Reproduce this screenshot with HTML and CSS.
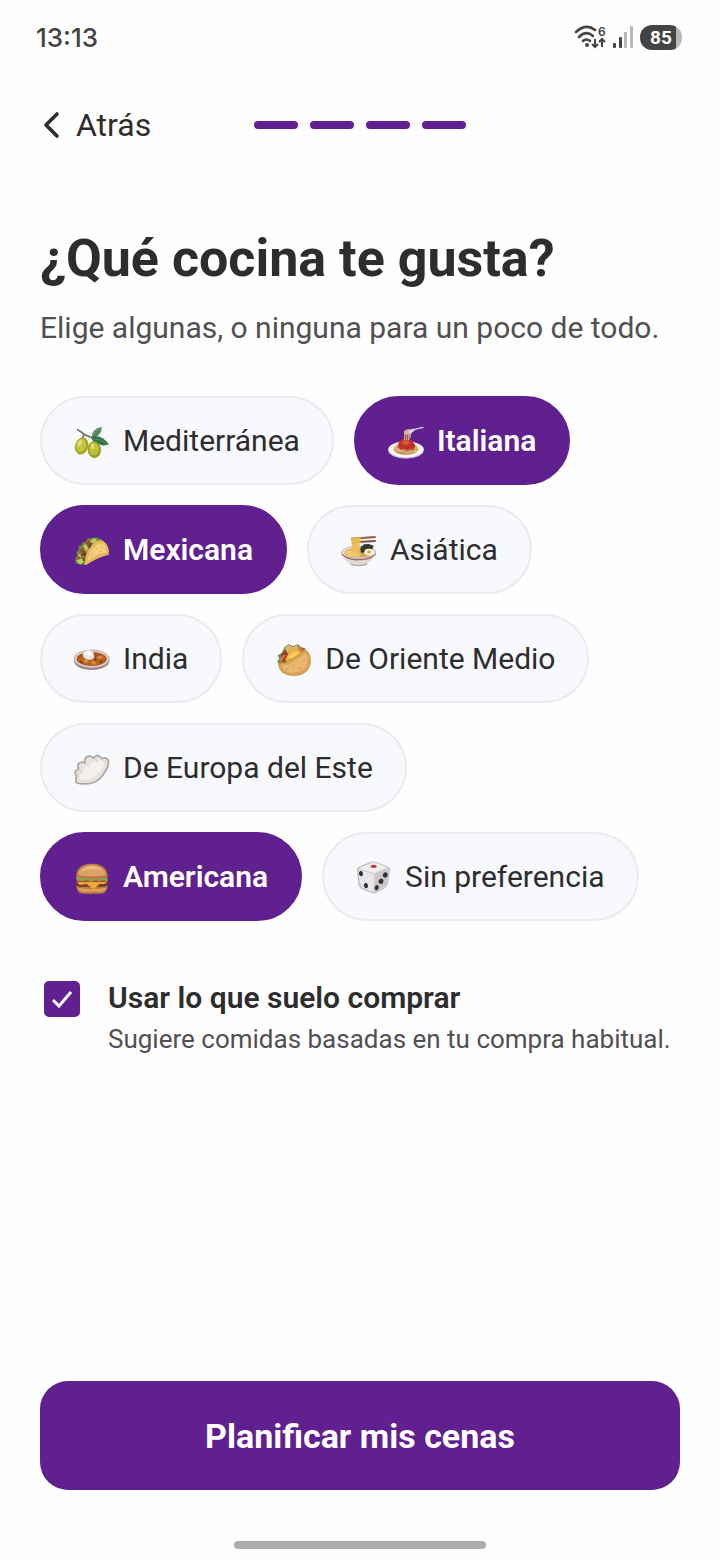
FILE: index.html
```html
<!DOCTYPE html>
<html lang="es">
<head>
    <meta charset="UTF-8">
    <meta name="viewport" content="width=device-width, initial-scale=1.0">
    <title>¿Qué cocina te gusta?</title>
    <link rel="stylesheet" href="styles.css">
</head>
<body>
    <div class="status-bar">
        <span class="clock">13:13</span>
        <div class="status-icons">
            <svg class="wifi" viewBox="0 0 32 26" aria-hidden="true">
                <g fill="none" stroke="#444" stroke-width="2.6" stroke-linecap="round">
                    <path d="M2 8Q12 -1 21 6"/>
                    <path d="M5 13Q12 6 19 12"/>
                    <path d="M9 17Q12 14 16 17"/>
                </g>
                <circle cx="13" cy="21" r="2" fill="#444"/>
                <text x="24" y="12" class="wifi-gen">6</text>
                <path d="M21 15v8m-3-3l3 3 3-3M28 23v-8m-3 3l3-3 3 3" fill="none" stroke="#444" stroke-width="2"/>
            </svg>
            <svg class="signal" viewBox="0 0 20 24" aria-hidden="true">
                <rect x="0" y="18" width="3" height="5" rx="1" fill="#444"/>
                <rect x="6" y="12" width="3" height="11" rx="1" fill="#444"/>
                <rect x="11" y="7" width="3" height="16" rx="1" fill="#b9b9b9"/>
                <rect x="17" y="1" width="3" height="22" rx="1" fill="#b9b9b9"/>
            </svg>
            <span class="battery">85</span>
        </div>
    </div>

    <header class="top-nav">
        <button class="back-btn" type="button">
            <svg class="back-icon" viewBox="0 0 18 28" aria-hidden="true">
                <path d="M14 3L3 14L14 25" fill="none" stroke="currentColor" stroke-width="3.6" stroke-linecap="round" stroke-linejoin="round"/>
            </svg>
            Atrás
        </button>
        <div class="steps">
            <span class="step"></span>
            <span class="step"></span>
            <span class="step"></span>
            <span class="step"></span>
        </div>
    </header>

    <main class="content">
        <h1 class="title">¿Qué cocina te gusta?</h1>
        <p class="subtitle">Elige algunas, o ninguna para un poco de todo.</p>

        <div class="chips">
            <button class="chip" type="button" aria-pressed="false">
                <svg class="chip-icon" viewBox="0 0 108 108" aria-hidden="true">
                    <path d="M53 43Q54 18 83 11Q85 32 62 44Z" fill="#4f8a5c"/>
                    <path d="M57 40Q62 24 80 15" fill="none" stroke="#8bb58c" stroke-width="2"/>
                    <path d="M11 20L33 35L58 46M30 34L25 46M55 44L60 58" fill="none" stroke="#6d705c" stroke-width="5" stroke-linecap="round"/>
                    <path d="M50 43Q80 30 105 64Q75 76 50 43Z" fill="#2f7348"/>
                    <path d="M58 47Q80 48 98 62" fill="none" stroke="#70a276" stroke-width="2"/>
                    <ellipse cx="23" cy="69" rx="20" ry="26" transform="rotate(18 23 69)" fill="#a5a627"/>
                    <ellipse cx="21" cy="67" rx="15" ry="20" transform="rotate(18 21 67)" fill="#c4c443"/>
                    <ellipse cx="18" cy="60" rx="5" ry="9" transform="rotate(25 18 60)" fill="#e3e17c"/>
                    <ellipse cx="61" cy="80" rx="20" ry="25" transform="rotate(-5 61 80)" fill="#999d20"/>
                    <ellipse cx="60" cy="78" rx="15" ry="19" fill="#bec13c"/>
                    <ellipse cx="56" cy="70" rx="5" ry="9" fill="#e0df76"/>
                </svg>
                Mediterránea
            </button>
            <button class="chip selected" type="button" aria-pressed="true">
                <svg class="chip-icon" viewBox="0 0 108 108" aria-hidden="true">
                    <ellipse cx="54" cy="82" rx="53" ry="25" fill="#c9c2d2"/>
                    <ellipse cx="54" cy="79" rx="53" ry="24" fill="#faf7f7"/>
                    <ellipse cx="54" cy="78" rx="38" ry="18" fill="#ddb57d"/>
                    <path d="M20 80Q35 96 55 86T89 79M26 72Q42 87 76 82M28 88Q55 100 78 87" fill="none" stroke="#b98550" stroke-width="3"/>
                    <path d="M29 70Q32 49 52 46Q75 47 82 70Q78 84 67 78Q58 86 49 78Q37 84 29 70Z" fill="#bd3326"/>
                    <path d="M40 60Q52 47 66 57Q62 68 51 65Z" fill="#e0583a"/>
                    <path d="M50 25V52M56 24V51M62 24V52M68 24L66 45" stroke="#c8a187" stroke-width="4"/>
                    <path d="M48 25Q57 14 73 22L70 32Q59 38 48 32Z" fill="#d7b396"/>
                    <path d="M64 28L80 19L105 13" fill="none" stroke="#d9cfe4" stroke-width="4" stroke-linecap="round"/>
                    <path d="M62 23L78 18M65 32L80 21" stroke="#eee4ee" stroke-width="3"/>
                </svg>
                Italiana
            </button>
            <button class="chip selected" type="button" aria-pressed="true">
                <svg class="chip-icon" viewBox="0 0 108 108" aria-hidden="true">
                    <path d="M5 95Q2 79 10 69Q4 61 14 53Q11 40 23 40Q22 28 36 29Q40 14 53 20Q65 13 77 20Q93 26 97 40L34 98Z" fill="#6e8934"/>
                    <path d="M10 77L18 69L27 80L15 90ZM17 55L27 48L36 60L26 66ZM36 31L46 25L54 35L43 44Z" fill="#9a492d"/>
                    <path d="M7 85L24 79L29 90L18 98ZM27 41L36 36L44 51L34 54ZM55 19L68 21L65 32L53 31Z" fill="#b6cf69"/>
                    <path d="M24 69L34 65L36 79L27 85M44 47L52 40" stroke="#643b2b" stroke-width="6" fill="none"/>
                    <path d="M14 67L20 76M32 49L39 57M48 26L59 32" stroke="#e9b15d" stroke-width="5"/>
                    <path d="M32 97Q32 64 50 44Q70 19 88 27Q108 42 104 68Q74 74 38 98Q34 101 32 97Z" fill="#e9b75f"/>
                    <path d="M41 88Q45 59 62 44Q77 30 89 36Q99 45 97 61Q65 67 41 88Z" fill="#f5ce7d"/>
                    <path d="M51 69l5 1M66 49l4 2M82 44l4 3M78 59l4-1" stroke="#dea454" stroke-width="3"/>
                </svg>
                Mexicana
            </button>
            <button class="chip" type="button" aria-pressed="false">
                <svg class="chip-icon" viewBox="0 0 108 108" aria-hidden="true">
                    <ellipse cx="53" cy="95" rx="26" ry="8" fill="#aaa39e"/>
                    <path d="M1 59Q9 98 52 99Q93 98 105 59Z" fill="#ddd9d4"/>
                    <path d="M2 66Q22 85 54 83Q86 84 104 65" fill="none" stroke="#a96a62" stroke-width="4"/>
                    <ellipse cx="53" cy="61" rx="51" ry="18" fill="#f2eeea" stroke="#948a84" stroke-width="2"/>
                    <ellipse cx="53" cy="62" rx="43" ry="14" fill="#d8a34c"/>
                    <path d="M10 61Q24 49 40 58Q52 64 62 70Q36 79 19 70Z" fill="#efcb76"/>
                    <path d="M35 23V64M41 23V67M47 23V67M53 24V66" stroke="#eec05a" stroke-width="6"/>
                    <path d="M58 47L69 37L83 36L98 41L92 58L75 61L60 62Z" fill="#303b32"/>
                    <ellipse cx="84" cy="60" rx="14" ry="10" fill="#fff8e8"/>
                    <ellipse cx="84" cy="60" rx="6" ry="5" fill="#e8a62f"/>
                    <path d="M31 20L104 15M33 31L104 27" stroke="#85513c" stroke-width="6"/>
                    <path d="M34 19L103 14" stroke="#bd7b56" stroke-width="2"/>
                    <path d="M31 18L60 16L58 32L32 34Z" fill="#eeb84e"/>
                </svg>
                Asiática
            </button>
            <button class="chip" type="button" aria-pressed="false">
                <svg class="chip-icon" viewBox="0 0 108 108" aria-hidden="true">
                    <ellipse cx="53" cy="59" rx="53" ry="28" fill="#968587"/>
                    <ellipse cx="53" cy="54" rx="53" ry="27" fill="#dfd2cc" stroke="#a58d88" stroke-width="2"/>
                    <ellipse cx="53" cy="54" rx="45" ry="21" fill="#a95320"/>
                    <path d="M12 54Q26 40 44 47T89 43Q100 53 85 65Q62 79 32 70Q17 66 12 54Z" fill="#b96524"/>
                    <path d="M27 58l10-5 8 9-9 5ZM49 64l12-5 7 8-10 5ZM68 47l11-4 8 8-12 3Z" fill="#d88d38"/>
                    <path d="M19 60l7 6M47 56l8-2M62 51l4 9M84 58l-7 7" stroke="#7b3420" stroke-width="4"/>
                    <path d="M26 43Q29 26 43 27Q57 26 60 41Q63 53 52 56Q32 59 26 43Z" fill="#e9e4e8"/>
                    <path d="M31 39Q36 29 46 31Q56 35 55 42Q44 47 31 39Z" fill="#fff"/>
                </svg>
                India
            </button>
            <button class="chip" type="button" aria-pressed="false">
                <svg class="chip-icon" viewBox="0 0 108 108" aria-hidden="true">
                    <path d="M8 73L4 60L10 54L5 43L17 35L26 17L38 9L52 15L66 10L75 18L87 22L91 43L28 84Z" fill="#70964d"/>
                    <path d="M16 55L16 40L31 23L48 15L81 22L87 38L29 71Z" fill="#a63a2e"/>
                    <path d="M26 21L38 10L52 18L63 12L69 26L36 38Z" fill="#d7b46a"/>
                    <path d="M27 56L44 25L72 26L80 39L36 66Z" fill="#edae37"/>
                    <path d="M34 50L50 32L65 31L71 39L46 54Z" fill="#f6cd59"/>
                    <path d="M14 58L26 42M68 17L79 30" stroke="#e2745a" stroke-width="6"/>
                    <path d="M9 65Q23 70 43 57Q68 45 87 24Q105 38 103 65Q101 89 78 99Q48 110 21 95Q7 85 9 65Z" fill="#dba257" stroke="#bb803f" stroke-width="2"/>
                    <path d="M18 74Q38 71 56 59Q76 48 88 35Q98 48 94 66Q89 86 66 94Q38 99 22 86Z" fill="#e8b870"/>
                    <path d="M31 84l6 1M49 74l5-2M68 83l7-3M82 60l4-4M62 61l4-3" stroke="#cf9045" stroke-width="3"/>
                </svg>
                De Oriente Medio
            </button>
            <button class="chip" type="button" aria-pressed="false">
                <svg class="chip-icon" viewBox="0 0 108 108" aria-hidden="true">
                    <path d="M7 98Q4 88 8 78Q-1 67 7 61L14 56Q7 44 18 38Q27 35 33 38Q30 22 44 18Q53 18 60 24Q67 12 78 20L84 25Q96 20 102 29Q107 42 94 64Q78 93 54 99Q28 105 7 98Z" fill="#e7e2df" stroke="#ada29f" stroke-width="5" stroke-linejoin="round"/>
                    <path d="M14 88Q21 63 36 49Q62 29 91 31Q94 46 77 67Q53 96 14 88Z" fill="#f4f1ec"/>
                    <path d="M15 60Q25 59 25 70M34 41Q42 39 44 51M60 27Q70 27 70 37M84 28Q93 31 91 38" fill="none" stroke="#d3cbc7" stroke-width="3"/>
                </svg>
                De Europa del Este
            </button>
            <button class="chip selected" type="button" aria-pressed="true">
                <svg class="chip-icon" viewBox="0 0 108 108" aria-hidden="true">
                    <path d="M7 80H101Q99 104 79 104H29Q8 103 7 80Z" fill="#bf7941"/>
                    <path d="M11 86Q52 94 97 86Q94 97 78 98H31Q13 97 11 86Z" fill="#dda05c"/>
                    <path d="M6 70Q5 82 17 83H92Q104 80 102 69Z" fill="#713c2a"/>
                    <path d="M8 68H101L90 76L78 74L58 91L38 75L17 78Z" fill="#f0a934"/>
                    <path d="M7 60H102V68L8 70Z" fill="#b54733"/>
                    <path d="M5 57Q9 50 18 54L31 53L42 58L54 54L67 59L81 54L96 56Q107 60 99 67Q88 62 79 67L65 64L52 68L38 64L25 67L10 65Z" fill="#87a44a"/>
                    <path d="M7 55Q5 16 53 14Q99 14 102 55Q65 65 7 55Z" fill="#bd7b48"/>
                    <path d="M12 48Q14 21 53 18Q91 20 96 48Q56 56 12 48Z" fill="#dca268"/>
                    <path d="M22 37Q31 23 52 22Q74 22 85 34Q52 25 22 37Z" fill="#ebbc83"/>
                </svg>
                Americana
            </button>
            <button class="chip" type="button" aria-pressed="false">
                <svg class="chip-icon" viewBox="0 0 108 108" aria-hidden="true">
                    <path d="M4 32Q4 26 14 22L45 10Q53 7 62 11L94 23Q102 26 101 34L94 75Q93 83 85 87L61 100Q54 104 45 100L18 89Q10 86 9 78Z" fill="#d5d2d4" stroke="#aaa5a8" stroke-width="2"/>
                    <path d="M10 28L49 11Q54 9 60 12L94 25L56 42Z" fill="#f0eeee"/>
                    <path d="M7 33L53 45L52 99L19 86Q13 83 12 77Z" fill="#e8e6e8"/>
                    <path d="M58 45L96 30L89 75Q88 81 82 84L56 99Z" fill="#c9c5c8"/>
                    <ellipse cx="53" cy="22" rx="9" ry="5" fill="#bd3442"/>
                    <g fill="#302c31">
                        <ellipse cx="15" cy="44" rx="6" ry="8" transform="rotate(-15 15 44)"/>
                        <ellipse cx="30" cy="80" rx="6" ry="8" transform="rotate(-15 30 80)"/>
                        <ellipse cx="88" cy="48" rx="7" ry="8" transform="rotate(18 88 48)"/>
                        <ellipse cx="75" cy="67" rx="7" ry="8" transform="rotate(18 75 67)"/>
                        <ellipse cx="62" cy="86" rx="6" ry="8" transform="rotate(18 62 86)"/>
                    </g>
                </svg>
                Sin preferencia
            </button>
        </div>

        <div class="option">
            <input class="option-check" type="checkbox" id="useHabits" checked>
            <label class="option-label" for="useHabits">
                <span class="option-title">Usar lo que suelo comprar</span>
                <span class="option-text">Sugiere comidas basadas en tu compra habitual.</span>
            </label>
        </div>
    </main>

    <footer class="footer">
        <button class="submit-btn" type="button">Planificar mis cenas</button>
        <div class="home-bar"></div>
    </footer>

    <script>
        // Toggle the cuisine chips
        document.querySelector('.chips').addEventListener('click', (e) => {
            const chip = e.target.closest('.chip');
            if (!chip) return;
            const selected = chip.classList.toggle('selected');
            chip.setAttribute('aria-pressed', selected);
        });
    </script>
</body>
</html>
```
FILE: styles.css
```css
:root {
    --primary: #602090;
    --text: #2d2d2f;
    --secondary-text: #505053;
    --chip-bg: #f8f9fc;
    --border: #e8ecf2;
}

* {
    margin: 0;
    padding: 0;
    box-sizing: border-box;
}

body {
    display: flex;
    flex-direction: column;
    min-height: 100vh;
    background: #fefefe;
    color: var(--text);
    font-family: Roboto, sans-serif;
}

button {
    font-family: inherit;
    cursor: pointer;
}

/* Status bar */
.status-bar {
    display: flex;
    align-items: center;
    justify-content: space-between;
    height: 74px;
    padding: 0 38px 0 36px;
    color: #444;
}

.clock {
    font-family: Inter, sans-serif;
    font-size: 26px;
    font-weight: 500;
}

.status-icons {
    display: flex;
    align-items: center;
    gap: 7px;
}

.wifi {
    width: 32px;
    height: 26px;
    overflow: visible;
}

.wifi-gen {
    font-family: Inter, sans-serif;
    font-size: 12px;
    font-weight: 600;
    fill: #444;
}

.signal {
    width: 20px;
    height: 24px;
}

.battery {
    width: 42px;
    border-radius: 12px;
    background: linear-gradient(to right, #444 85%, #b9b9b9 85%);
    color: #fff;
    font-size: 19px;
    font-weight: 700;
    line-height: 25px;
    text-align: center;
}

/* Back button and progress */
.top-nav {
    display: grid;
    grid-template-columns: 1fr auto 1fr;
    align-items: center;
    height: 102px;
    padding: 0 40px;
}

.back-btn {
    display: flex;
    align-items: center;
    justify-self: start;
    gap: 15px;
    padding: 0 3px;
    border: none;
    background: none;
    color: var(--text);
    font-size: 32px;
}

.back-icon {
    width: 18px;
    height: 28px;
}

.steps {
    display: flex;
    gap: 12px;
}

.step {
    width: 44px;
    height: 8px;
    border-radius: 4px;
    background: var(--primary);
}

/* Main content */
.content {
    flex: 1;
    padding: 51px 40px 0;
}

.title {
    font-size: 52px;
    font-weight: 700;
    line-height: 64px;
}

.subtitle {
    margin-top: 17px;
    color: var(--secondary-text);
    font-size: 30px;
    line-height: 40px;
}

.chips {
    display: flex;
    flex-wrap: wrap;
    gap: 20px;
    margin-top: 48px;
}

.chip {
    display: flex;
    align-items: center;
    gap: 13px;
    height: 89px;
    padding: 0 32px;
    border: 2px solid var(--border);
    border-radius: 45px;
    background: var(--chip-bg);
    color: var(--text);
    font-size: 30px;
    white-space: nowrap;
}

.chip.selected {
    border-color: var(--primary);
    background: var(--primary);
    color: #fff;
    font-weight: 600;
}

.chip-icon {
    width: 36px;
    height: 36px;
}

.option {
    display: flex;
    align-items: flex-start;
    gap: 28px;
    margin-top: 56px;
    padding: 0 4px;
}

.option-check {
    appearance: none;
    flex-shrink: 0;
    width: 36px;
    height: 36px;
    margin-top: 4px;
    border: 2px solid var(--primary);
    border-radius: 5px;
    cursor: pointer;
}

.option-check:checked {
    background: var(--primary) url("data:image/svg+xml,%3Csvg xmlns='http://www.w3.org/2000/svg' viewBox='0 0 32 32'%3E%3Cpath d='M7 17l6 6L25 9' fill='none' stroke='white' stroke-width='3'/%3E%3C/svg%3E") center / 32px no-repeat;
}

.option-label {
    display: flex;
    flex-direction: column;
    gap: 2px;
    cursor: pointer;
}

.option-title {
    font-size: 30px;
    font-weight: 600;
    line-height: 42px;
}

.option-text {
    color: var(--secondary-text);
    font-size: 26px;
    line-height: 36px;
}

/* Bottom action */
.footer {
    padding: 40px 40px 11px;
}

.submit-btn {
    width: 100%;
    height: 109px;
    border: none;
    border-radius: 28px;
    background: var(--primary);
    color: #fff;
    font-size: 34px;
    font-weight: 700;
}

.home-bar {
    width: 252px;
    height: 8px;
    margin: 51px auto 0;
    border-radius: 4px;
    background: #adadad;
}
```
